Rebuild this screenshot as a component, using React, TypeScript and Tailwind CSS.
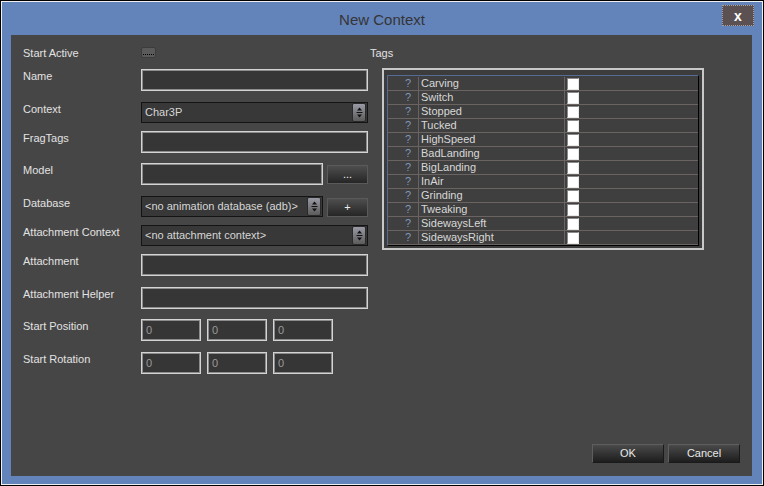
const font = { fontFamily: '"Liberation Sans", Arial, sans-serif' }

const tags = [
  'Carving',
  'Switch',
  'Stopped',
  'Tucked',
  'HighSpeed',
  'BadLanding',
  'BigLanding',
  'InAir',
  'Grinding',
  'Tweaking',
  'SidewaysLeft',
  'SidewaysRight',
]

function Spinner() {
  return (
    <div className="w-[14px] h-[19px] my-auto mr-[1px] rounded-[2px] bg-gradient-to-b from-[#9a9aa6] to-[#5c5c5c] border border-[#2a2a2a] flex items-center justify-center">
      <svg width="7" height="11" viewBox="0 0 7 11">
        <path d="M3.5 0.5 L6 3.5 L1 3.5 Z" fill="#111" />
        <rect x="0.5" y="5" width="6" height="1" fill="#111" />
        <path d="M3.5 10.5 L6 7.5 L1 7.5 Z" fill="#111" />
      </svg>
    </div>
  )
}

function TextBox({ w = 'w-[227px]', value = '' }: { w?: string; value?: string }) {
  return (
    <div
      className={`${w} h-[22px] border border-[#d4d4d4] shadow-[inset_0_0_0_1px_#8c8c8c] bg-[#363636] flex items-center pl-[4px] text-[11px] text-[#9a9a9a]`}
    >
      {value}
    </div>
  )
}

function Select({ w = 'w-[227px]', value }: { w?: string; value: string }) {
  return (
    <div className={`${w} h-[21px] border border-[#141414] bg-[#383838] flex`}>
      <div className="flex-1 flex items-center pl-[3px] text-[11px] text-[#d6d6d6] truncate">{value}</div>
      <Spinner />
    </div>
  )
}

function SmallButton({ label }: { label: string }) {
  return (
    <div className="ml-[4px] mt-[2px] w-[41px] h-[19px] border border-[#5a5a5a] bg-gradient-to-b from-[#4e4e4e] to-[#262626] flex items-center justify-center text-[11px] text-[#eeeeee]">
      {label}
    </div>
  )
}

function Label({ children }: { children: string }) {
  return <div className="w-[118px] shrink-0 h-[14px] leading-[14px] text-[11px] text-[#e2e2e2]">{children}</div>
}

function XYZ() {
  return (
    <div className="flex gap-[6px]">
      <TextBox w="w-[60px]" value="0" />
      <TextBox w="w-[60px]" value="0" />
      <TextBox w="w-[60px]" value="0" />
    </div>
  )
}

function DialogButton({ label }: { label: string }) {
  return (
    <div className="w-[72px] h-[19px] border border-[#5e5e5e] border-b-[#1a1a1a] border-r-[#1a1a1a] bg-gradient-to-b from-[#4a4a4a] to-[#1e1e1e] flex items-center justify-center text-[11px] text-[#e8e8e8]">
      {label}
    </div>
  )
}

export default function App() {
  return (
    <div style={font} className="w-[764px] h-[486px] border border-black">
      <div className="w-full h-full border border-[#f0f0f0] bg-[#6383bb] flex flex-col px-[8px] pb-[8px]">
        {/* Title bar */}
        <div className="h-[33px] grid grid-cols-[1fr_auto_1fr] items-start">
          <div />
          <div className="mt-[8px] text-[15px] leading-[20px] text-[#353535]">New Context</div>
          <div className="justify-self-end mt-[3px]">
            <div className="w-[32px] h-[21px] bg-[#5b5152] border border-dotted border-[#a9a2a2] flex items-center justify-center text-[14px] font-bold text-white leading-none">
              x
            </div>
          </div>
        </div>

        {/* Content */}
        <div className="ml-[1px] mr-[2px] flex-1 bg-[#464646] flex flex-col">
          <div className="flex">
            {/* Left form */}
            <div className="pl-[12px] pt-[11px] flex flex-col">
              <div className="h-[23px] flex items-start">
                <Label>Start Active</Label>
                <div className="mt-[1px] w-[15px] h-[11px] rounded-[2px] bg-[#5a5a5a] border border-[#3c3c3c] flex items-end pb-[2px] px-[1px]">
                  <div className="w-full border-b border-dotted border-black" />
                </div>
              </div>
              <div className="h-[33px] flex items-start">
                <Label>Name</Label>
                <TextBox />
              </div>
              <div className="h-[29px] flex items-start">
                <Label>Context</Label>
                <Select value="Char3P" />
              </div>
              <div className="h-[32px] flex items-start">
                <Label>FragTags</Label>
                <TextBox />
              </div>
              <div className="h-[33px] flex items-start">
                <Label>Model</Label>
                <TextBox w="w-[182px]" />
                <SmallButton label="..." />
              </div>
              <div className="h-[29px] flex items-start">
                <Label>Database</Label>
                <Select w="w-[182px]" value="<no animation database (adb)>" />
                <SmallButton label="+" />
              </div>
              <div className="h-[29px] flex items-start">
                <Label>Attachment Context</Label>
                <Select value="<no attachment context>" />
              </div>
              <div className="h-[33px] flex items-start">
                <Label>Attachment</Label>
                <TextBox />
              </div>
              <div className="h-[32px] flex items-start">
                <Label>Attachment Helper</Label>
                <TextBox />
              </div>
              <div className="h-[33px] flex items-start">
                <Label>Start Position</Label>
                <XYZ />
              </div>
              <div className="h-[33px] flex items-start">
                <Label>Start Rotation</Label>
                <XYZ />
              </div>
            </div>

            {/* Tags */}
            <div className="ml-[2px] pt-[11px] flex flex-col">
              <div className="h-[14px] leading-[14px] text-[11px] text-[#e2e2e2]">Tags</div>
              <div className="mt-[8px] ml-[12px] w-[322px] h-[182px] border-2 border-[#c8c8c8] bg-[#3c3c3c] pt-[5px] px-[3px] pb-[2px]">
                <div className="h-[171px] border border-black border-t-[#566b93] border-l-[#566b93] bg-[#3f3f3f] pt-[1px]">
                  {tags.map((t) => (
                    <div key={t} className="h-[14px] flex border-b border-[#6b6262] text-[11px] leading-[13px]">
                      <div className="w-[30px] text-right pr-[7px] text-[#8096bb]">?</div>
                      <div className="w-[146px] border-l border-[#6b6262] pl-[2px] text-[#d8d8d8]">{t}</div>
                      <div className="flex-1 border-l border-[#6b6262] pl-[2px] flex items-center">
                        <div className="w-[12px] h-[12px] bg-white border border-[#8a8a8a] border-r-[#e8e8e8] border-b-[#e8e8e8]" />
                      </div>
                    </div>
                  ))}
                </div>
              </div>
            </div>
          </div>

          <div className="flex-1" />

          {/* Buttons */}
          <div className="flex justify-end gap-[4px] pr-[12px] pb-[13px]">
            <DialogButton label="OK" />
            <DialogButton label="Cancel" />
          </div>
        </div>
      </div>
    </div>
  )
}
